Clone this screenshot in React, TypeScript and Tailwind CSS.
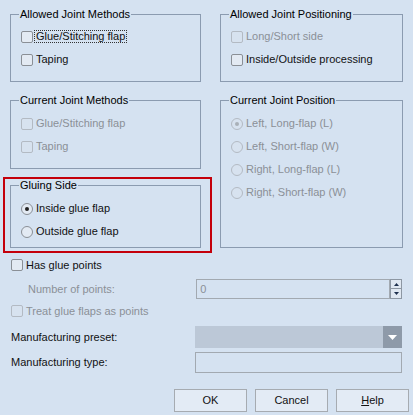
import React from "react";

const FONT = { fontFamily: '"Liberation Sans", Arial, sans-serif' };

function Box({ disabled }: { disabled?: boolean }) {
  return (
    <span
      className={`block h-[12px] w-[12px] shrink-0 rounded-[2px] border ${
        disabled ? "border-[#b3bac3] bg-[#d7e2ef]" : "border-[#8a8f96] bg-[#e3eaf3]"
      }`}
    />
  );
}

function Check({ label, disabled, focused }: { label: string; disabled?: boolean; focused?: boolean }) {
  return (
    <div className="flex h-[23px] items-center">
      <Box disabled={disabled} />
      <span
        className={`ml-[1px] border px-[1px] leading-[11px] ${
          focused ? "border-dotted border-[#333]" : "border-transparent"
        } ${disabled ? "text-[#8b9097]" : "text-[#111]"}`}
      >
        {label}
      </span>
    </div>
  );
}

function Radio({ label, checked, disabled }: { label: string; checked?: boolean; disabled?: boolean }) {
  return (
    <div className="flex h-[23px] items-center">
      <span
        className={`flex h-[12px] w-[12px] shrink-0 items-center justify-center rounded-full border ${
          disabled ? "border-[#b3bac3] bg-[#d7e2ef]" : "border-[#8a8f96] bg-[#e3eaf3]"
        }`}
      >
        {checked && (
          <span className={`block h-[4px] w-[4px] rounded-full ${disabled ? "bg-[#a9b0b8]" : "bg-[#222]"}`} />
        )}
      </span>
      <span className={`ml-[3px] ${disabled ? "text-[#8b9097]" : "text-[#111]"}`}>{label}</span>
    </div>
  );
}

function Group({ title, className, children }: { title: string; className: string; children: React.ReactNode }) {
  return (
    <fieldset className={`border border-[#8b9bb0] pl-[10px] ${className}`}>
      <legend className="-ml-[2px] px-[1px] font-normal leading-[12px] text-black">{title}</legend>
      {children}
    </fieldset>
  );
}

function Row({ label, children }: { label: string; children: React.ReactNode }) {
  return (
    <div className="flex items-center">
      <span className="w-[188px] text-[#111]">{label}</span>
      {children}
    </div>
  );
}

export default function App() {
  return (
    <div className="h-[415px] w-[413px] overflow-hidden bg-[#d5e2f1] text-[11px]" style={FONT}>
      <div className="flex items-start gap-[19px] px-[10px]">
        <div className="flex w-[191px] flex-col pt-[8px]">
          <Group title="Allowed Joint Methods" className="h-[74px] pt-[5px]">
            <Check label="Glue/Stitching flap" focused />
            <Check label="Taping" />
          </Group>
          <Group title="Current Joint Methods" className="mt-[12px] h-[75px] pt-[6px]">
            <Check label="Glue/Stitching flap" disabled />
            <Check label="Taping" disabled />
          </Group>
          <div className="-ml-[7px] mt-[8px] w-[209px] border-2 border-[#c4000b] pb-[3px] pl-[5px] pr-[9px]">
            <Group title="Gluing Side" className="h-[69px] pt-[6px]">
              <Radio label="Inside glue flap" checked />
              <Radio label="Outside glue flap" />
            </Group>
          </div>
        </div>
        <div className="flex w-[191px] flex-col pt-[8px]">
          <Group title="Allowed Joint Positioning" className="h-[74px] pt-[5px]">
            <Check label="Long/Short side" disabled />
            <Check label="Inside/Outside processing" />
          </Group>
          <Group title="Current Joint Position" className="mt-[12px] h-[154px] pt-[6px]">
            <Radio label="Left, Long-flap (L)" checked disabled />
            <Radio label="Left, Short-flap (W)" disabled />
            <Radio label="Right, Long-flap (L)" disabled />
            <Radio label="Right, Short-flap (W)" disabled />
          </Group>
        </div>
      </div>

      <div className="flex flex-col px-[11px]">
        <div className="mt-[4px] flex h-[16px] items-center">
          <Box />
          <span className="ml-[3px] text-[#111]">Has glue points</span>
        </div>
        <div className="mt-[6px] flex h-[20px] items-center">
          <span className="w-[189px] pl-[17px] text-[#8b9097]">Number of points:</span>
          <div className="flex h-[20px] w-[198px] items-center border border-[#a2a9b1] pl-[3px] text-[#8b9097]">0</div>
          <div className="flex h-[20px] w-[12px] flex-col">
            <span className="flex h-[10px] items-center justify-center border border-[#8d97a3] bg-[#dfe7f1]">
              <svg width="5" height="3" viewBox="0 0 5 3">
                <path d="M0 3 L2.5 0 L5 3 Z" fill="#1d2f4d" />
              </svg>
            </span>
            <span className="flex h-[10px] items-center justify-center border border-t-0 border-[#8d97a3] bg-[#dfe7f1]">
              <svg width="5" height="3" viewBox="0 0 5 3">
                <path d="M0 0 L5 0 L2.5 3 Z" fill="#1d2f4d" />
              </svg>
            </span>
          </div>
        </div>
        <div className="mt-[4px] flex h-[16px] items-center">
          <Box disabled />
          <span className="ml-[3px] text-[#8b9097]">Treat glue flaps as points</span>
        </div>
        <div className="mt-[7px]">
          <Row label="Manufacturing preset:">
            <div className="flex h-[22px] w-[212px] justify-end bg-[#bcc8d7]">
              <span className="flex w-[19px] items-center justify-center bg-[#8e9aa9]">
                <svg width="9" height="5" viewBox="0 0 9 5">
                  <path d="M0 0 L9 0 L4.5 5 Z" fill="#ffffff" />
                </svg>
              </span>
            </div>
          </Row>
        </div>
        <div className="mt-[4px]">
          <Row label="Manufacturing type:">
            <div className="h-[21px] w-[212px] border border-[#a2a9b1]" />
          </Row>
        </div>
      </div>

      <div className="mt-[16px] flex justify-end gap-[8px] pr-[4px]">
        {["OK", "Cancel", "Help"].map((b) => (
          <button
            key={b}
            type="button"
            className="h-[23px] w-[73px] border border-[#a6abb1] bg-[#e3ebf5] text-[#111]"
          >
            {b === "Help" ? (
              <>
                <span className="underline">H</span>elp
              </>
            ) : (
              b
            )}
          </button>
        ))}
      </div>
    </div>
  );
}
